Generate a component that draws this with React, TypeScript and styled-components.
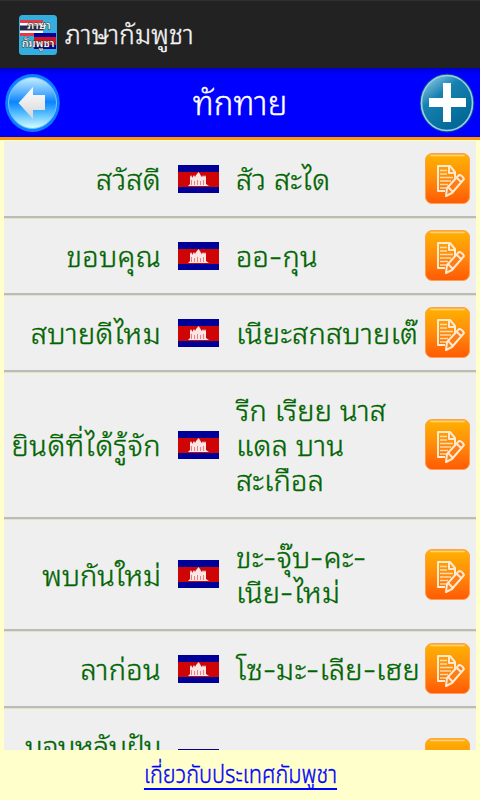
import React from "react";
import styled, { createGlobalStyle } from "styled-components";

const GlobalStyle = createGlobalStyle`
  * { box-sizing: border-box; }
  body { margin: 0; background: #ffffcc; }
`;

const Screen = styled.div`
  width: 480px;
  height: 800px;
  overflow: hidden;
  display: flex;
  flex-direction: column;
  background: #ffffcc;
  font-family: "Noto Sans Thai Looped", Loma, "Noto Sans", sans-serif;
  font-weight: 300;
`;

const AppBar = styled.header`
  height: 68px;
  flex: none;
  display: flex;
  align-items: center;
  gap: 8px;
  padding: 0 19px;
  background: #222;
  border-top: 1px solid #303030;
  color: #f3f3f3;
`;

const AppName = styled.div`
  padding-bottom: 6px;
`;

const Label = styled.span<{ $size: number; $spacing?: number; $line?: number }>`
  display: block;
  white-space: nowrap;
  font-size: ${(p) => p.$size}px;
  line-height: ${(p) => p.$line ?? 35}px;
  letter-spacing: ${(p) => p.$spacing ?? 0}px;
  -webkit-text-stroke: 0.35px currentColor;
`;

const Dash = styled.span`
  display: inline-block;
  margin: 0 1.8px;
  transform: translateY(-1px) scaleX(1.3);
`;

const TitleBar = styled.div`
  height: 72px;
  flex: none;
  display: flex;
  align-items: center;
  justify-content: space-between;
  padding: 0 5px 0 4px;
  background: linear-gradient(#0000c8, #0000ff 6px);
  border-bottom: 3px solid #ff9800;
  color: #fff;
`;

const Title = styled.h1`
  margin: 0;
  padding-bottom: 4px;
  font: inherit;
`;

const List = styled.main`
  height: 609px;
  flex: none;
  margin: 1px 4px 0;
  overflow: hidden;
  background: #efefef;
`;

const Row = styled.section`
  display: grid;
  grid-template-columns: 157px 75px 184px 1fr;
  align-items: center;
  padding: 19px 0 21px;
  border-bottom: 2px solid #bbb;
  box-shadow: 0 1px 0 #e4e4bd;
  color: #006400;
`;

const Term = styled.div`
  text-align: right;
`;

const FlagCell = styled.div`
  display: flex;
  padding: 2px 0 0 17px;
`;

const Meaning = styled.div``;

const EditButton = styled.button`
  width: 45px;
  height: 51px;
  margin: -7px 6px -9px 0;
  padding: 0;
  border: 0;
  background: none;
  justify-self: end;
`;

const Footer = styled.footer`
  height: 50px;
  flex: none;
  display: flex;
  justify-content: center;
  align-items: center;
  padding-top: 3px;
`;

const Link = styled.a`
  color: #0000ff;
  border-bottom: 2px solid #0000ff;
  font-family: "Noto Sans Thai", sans-serif;
  transform: scaleX(0.89);
`;

const Flag = () => (
  <svg width="41" height="28" viewBox="0 0 41 28" display="block">
    <path fill="#000099" d="M0 0h41v28H0z" />
    <path fill="#cf0505" d="M0 7h41v15H0z" />
    <path fill="#fff" fillOpacity=".9" d="M10 21l2-2v-7l1-2 1 2v1l2-3 1 2 1-2 1-1 1.500-2 1.500 2 1 2 1 1 1-2 1 2 1-2 1 2v7l3 2z" />
    <path stroke="#cf0505" strokeOpacity=".45" d="M13.500 15v5M16.500 16v4M19.500 15v5M22.500 16v4M25.500 15v5" />
  </svg>
);

const EditIcon = () => (
  <svg width="45" height="51" viewBox="0 0 45 51" display="block">
    <defs>
      <linearGradient id="edit" x2="0" y2="1">
        <stop stopColor="#ffb300" />
        <stop offset=".5" stopColor="#ff8c0a" />
        <stop offset="1" stopColor="#ff5a05" />
      </linearGradient>
    </defs>
    <rect x=".5" y=".5" width="44" height="50" rx="6.500" fill="url(#edit)" stroke="#ffa04a" />
    <path d="M6 2.500h33" stroke="#ffd089" strokeWidth="1.500" strokeLinecap="round" />
    <g fill="none" stroke="#ffe9cf" strokeWidth="2" strokeLinejoin="round">
      <path d="M20 38h-7V13h12l5 6v7M24 13v7h6" />
      <path strokeWidth="1.500" strokeOpacity=".85" d="M15 17.500h7M15 21h7M15 24.500h13M15 28h11M15 31.500h8M15 35h6" />
      <path fill="#ff7d16" d="M21 43l1-8 12-13q3 0 5 4l-12 14zM23 34l5 5M32 25l4 4" />
    </g>
  </svg>
);

const BackIcon = () => (
  <svg width="57" height="60" viewBox="0 0 57 60" display="block">
    <defs>
      <linearGradient id="back" x2="0" y2="1">
        <stop stopColor="#c5efff" />
        <stop offset=".3" stopColor="#56b0ff" />
        <stop offset=".48" stopColor="#0b83ff" />
        <stop offset=".7" stopColor="#51bcff" />
        <stop offset="1" stopColor="#d8ffff" />
      </linearGradient>
      <linearGradient id="arrow" x2="0" y2="1">
        <stop stopColor="#fff" />
        <stop offset="1" stopColor="#d5d5d5" />
      </linearGradient>
    </defs>
    <ellipse cx="28.500" cy="30" rx="27.300" ry="29" fill="#0f7dff" />
    <ellipse cx="28.500" cy="30" rx="24" ry="25.500" fill="url(#back)" stroke="#75c5ff" />
    <path d="M14.500 30L29 14v8h12v15H29v9z" fill="url(#arrow)" />
  </svg>
);

const AddIcon = () => (
  <svg width="56" height="60" viewBox="0 0 56 60" display="block">
    <defs>
      <linearGradient id="add" x2=".7" y2="1">
        <stop stopColor="#a9d9ed" />
        <stop offset=".4" stopColor="#1681b1" />
        <stop offset="1" stopColor="#006693" />
      </linearGradient>
    </defs>
    <ellipse cx="28" cy="30" rx="27.300" ry="29.300" fill="#07549b" />
    <ellipse cx="28" cy="30" rx="25.500" ry="27.500" fill="url(#add)" stroke="#9ccfe6" strokeWidth="1.600" />
    <path d="M24 10h8v15h15v9H32v15h-8V34H10v-9h14z" fill="#fff" />
  </svg>
);

const Logo = () => (
  <svg width="38" height="40" viewBox="0 0 38 40" display="block">
    <rect width="38" height="40" rx="3.500" fill="#34aedd" />
    <path fill="#e53946" d="M1 5h23v16H1z" />
    <path fill="#fff" d="M1 8h23v10H1z" />
    <path fill="#282850" d="M1 10.500h23v5H1z" />
    <path fill="#00009b" d="M15 18h22v16H15z" />
    <path fill="#d41224" d="M15 22h22v8H15z" />
    <g fill="#fff" stroke="#333" strokeWidth="1" paintOrder="stroke" fontSize="11" fontWeight="500" textAnchor="middle">
      <text x="20" y="14">ภาษา</text>
      <text x="19" y="32">กัมพูชา</text>
    </g>
  </svg>
);

type Phrase = { term: string[]; meaning: string[]; spacing?: number };
const phrases: Phrase[] = [
  { term: ["สวัสดี"], meaning: ["สัว สะได"] },
  { term: ["ขอบคุณ"], meaning: ["ออ-กุน"] },
  { term: ["สบายดีไหม"], meaning: ["เนียะสกสบายเต๊"] },
  { term: ["ยินดีที่ได้รู้จัก"], meaning: ["รีก เรียย นาส", "แดล บาน", "สะเกือล"], spacing: 0.5 },
  { term: ["พบกันใหม่"], meaning: ["ขะ-จุ๊บ-คะ-", "เนีย-ไหม่"], spacing: -0.1 },
  { term: ["ลาก่อน"], meaning: ["โซ-มะ-เลีย-เฮย"] },
  { term: ["นอนหลับฝัน", "\u00a0"], meaning: [], spacing: -0.6 },
];

const withDashes = (line: string) =>
  line.split("-").map((part, i) => (
    <React.Fragment key={i}>
      {i > 0 && <Dash>-</Dash>}
      {part}
    </React.Fragment>
  ));

export default function App() {
  return (
    <Screen>
      <GlobalStyle />
      <AppBar>
        <Logo />
        <AppName><Label $size={26} $line={28} $spacing={0.1}>ภาษากัมพูชา</Label></AppName>
      </AppBar>
      <TitleBar>
        <BackIcon />
        <Title><Label $size={33}>ทักทาย</Label></Title>
        <AddIcon />
      </TitleBar>
      <List>
        {phrases.map((p) => (
          <Row key={p.term[0]}>
            <Term>{p.term.map((l) => <Label key={l} $size={29} $spacing={p.spacing ?? 0.3}>{l}</Label>)}</Term>
            <FlagCell><Flag /></FlagCell>
            <Meaning>
              {p.meaning.map((l) => <Label key={l} $size={29} $spacing={0.2}>{withDashes(l)}</Label>)}
            </Meaning>
            <EditButton><EditIcon /></EditButton>
          </Row>
        ))}
      </List>
      <Footer>
        <Link><Label $size={24.4} $line={24}>เกี่ยวกับประเทศกัมพูชา</Label></Link>
      </Footer>
    </Screen>
  );
}
